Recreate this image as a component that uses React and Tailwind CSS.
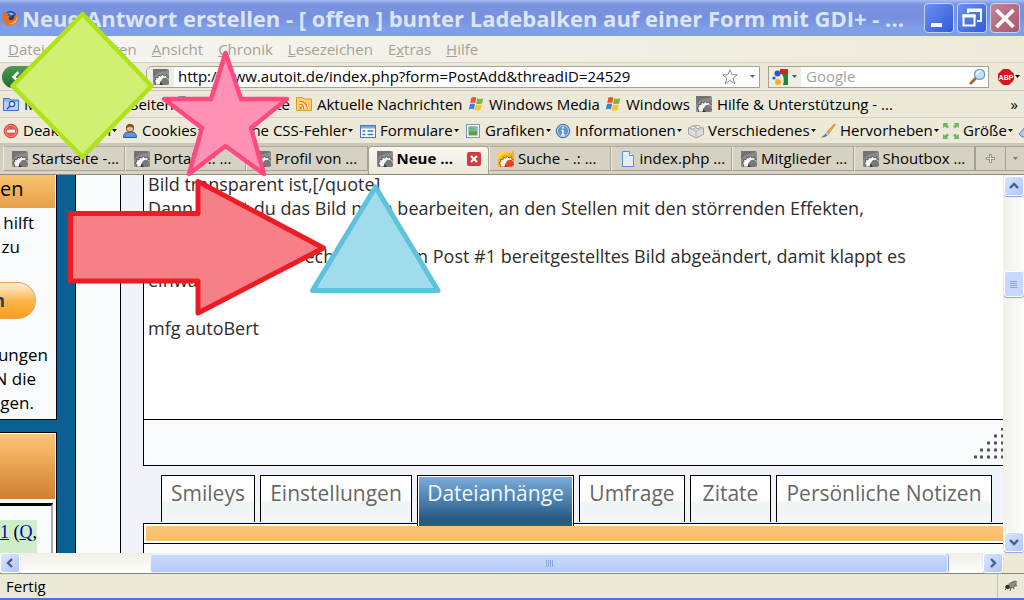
import React from "react";

const ui = "font-['Open_Sans','Noto_Sans',sans-serif]";

function Gear({ hot }) {
  return (
    <svg viewBox="0 0 16 16" className="h-4 w-4 shrink-0" aria-hidden="true">
      <rect width="16" height="16" rx="1.5" fill={hot ? "#f9b31e" : "#8d8d8d"} />
      <path d="M0 9Q4 2 14 2V0H0z" fill={hot ? "#fdd24a" : "#737373"} />
      <path
        d="M2.500 16l.3-2.500L.8 12l2.200-1.200L2.300 8.500l2.700.3L5.500 6l2.200 1.200L9.500 5l1.500 2 2.600-1.200.2 2.600L16 9v5l-3-3-5 1-1 4z"
        fill={hot ? "#fffbe8" : "#f8f8f8"}
        stroke={hot ? "#a8401a" : "#4a4a4a"}
        strokeWidth=".8"
      />
      <circle cx="12" cy="12.300" r="3.600" fill={hot ? "#e0441a" : "#787878"} />
      <path d="M6.500 16l1.200-3 2.500 3z" fill={hot ? "#b32c10" : "#3a3a3a"} />
    </svg>
  );
}

function Firefox() {
  return (
    <svg viewBox="0 0 16 16" className="h-4 w-4 shrink-0" aria-hidden="true">
      <circle cx="8.500" cy="7.500" r="6.500" fill="#1f3f8f" />
      <path d="M6 3q4-2 7 2-3-1-4 1z" fill="#6ab0ea" />
      <path d="M1 1.500l2.500 2Q5 2.500 6.500 3L5.500 5l3 1.300-2 1.500q.5 3 3.500 2.400 2.500-.7 2.300-4l2-2.200Q17 9 14 13q-3 3-7.500 2.500Q1 14.500.6 8 .4 5 1 1.500z" fill="#e8721c" />
      <path d="M14 3q2 5-1 8t-7 2.500q4 2 7.500-1Q17 8 14 3z" fill="#fbc437" />
    </svg>
  );
}

function SearchFolder() {
  return (
    <svg viewBox="0 0 16 16" className="h-4 w-4 shrink-0" aria-hidden="true">
      <path d="M.5 2.500h6l1.500 1.500h7.500v10.500H.5z" fill="#8fb7f3" stroke="#3c72cf" />
      <path d="M1 6h14v8H1z" fill="#b5d1fa" />
      <circle cx="9" cy="8" r="2.600" fill="#e8f2ff" stroke="#2a58b0" strokeWidth="1.300" />
      <path d="M7 10l-3 3" stroke="#2a58b0" strokeWidth="1.600" />
    </svg>
  );
}

function Rss() {
  return (
    <svg viewBox="0 0 16 16" className="h-4 w-4 shrink-0" aria-hidden="true">
      <path d="M.5 1.500h6L8 3h7.500v11.500H.5z" fill="#f9cf68" stroke="#dc9a2a" />
      <circle cx="4.500" cy="12" r="1.300" fill="#e97d11" />
      <path d="M3.500 8.300q4 0 4.200 4.700M3.500 5q7.500.3 7.700 8" fill="none" stroke="#fff" strokeWidth="2.600" />
      <path d="M3.500 8.300q4 0 4.200 4.700M3.500 5q7.500.3 7.700 8" fill="none" stroke="#e97d11" strokeWidth="1.400" />
    </svg>
  );
}

function WinFlag() {
  return (
    <svg viewBox="0 0 16 16" className="h-4 w-4 shrink-0" aria-hidden="true">
      <path d="M3.300 1.800q2.500-1.700 5 0L7.200 7.200q-2.700-1.500-5 0z" fill="#e9552b" />
      <path d="M9.200 2.200q3 1.500 6.200 0L14 7.500q-3 1.500-5.900 0z" fill="#7dba3c" />
      <path d="M2 8.200q2.500-1.600 5 0L5.900 13.600q-2.500-1.600-5.200 0z" fill="#3c7fd6" />
      <path d="M7.900 8.500q3 1.500 5.900 0l-1.300 5.500q-3 1.500-5.800 0z" fill="#f7c331" />
    </svg>
  );
}

function Deny() {
  return (
    <svg viewBox="0 0 16 16" className="h-4 w-4 shrink-0" aria-hidden="true">
      <circle cx="8" cy="8" r="6.800" fill="#e2574e" stroke="#c9403a" />
      <circle cx="8" cy="8" r="5.600" fill="none" stroke="#f2a49c" strokeWidth=".8" />
      <rect x="4" y="6.700" width="8" height="2.800" fill="#fff" />
    </svg>
  );
}

function Person() {
  return (
    <svg viewBox="0 0 16 16" className="h-4 w-4 shrink-0" aria-hidden="true">
      <path d="M1.500 14.500q0-5 4-5.500h5q4 .5 4 5.500z" fill="#5d95dc" stroke="#2a58a6" />
      <circle cx="8" cy="5.200" r="3.700" fill="#f1bd87" stroke="#8a4d1b" />
      <path d="M4.200 5Q4 1 8 1t3.800 4Q9 4 8 3.500 6 4.500 4.200 5z" fill="#8a4d1b" />
    </svg>
  );
}

function Check() {
  return (
    <svg viewBox="0 0 16 16" className="h-4 w-4 shrink-0" aria-hidden="true">
      <circle cx="8" cy="8" r="7" fill="#63b04a" />
      <path d="M4 8l3 3 5-6" fill="none" stroke="#fff" strokeWidth="2" />
    </svg>
  );
}

function FormIcon() {
  return (
    <svg viewBox="0 0 16 16" className="h-4 w-4 shrink-0" aria-hidden="true">
      <rect x=".5" y="2.500" width="15" height="12" fill="#fff" stroke="#4576b8" />
      <path d="M1 3h14v2.500H1z" fill="#7aa9e4" />
      <path d="M2.500 8h3M2.500 11.500h3M7.500 8h6M7.500 11.500h6" stroke="#4576b8" strokeWidth="1.400" />
    </svg>
  );
}

function ImageIcon() {
  return (
    <svg viewBox="0 0 16 16" className="h-4 w-4 shrink-0" aria-hidden="true">
      <rect x="1.500" y="1.500" width="13" height="13" fill="#fff" stroke="#7b93b4" />
      <rect x="3.500" y="3.500" width="9" height="9" fill="#58a148" />
      <path d="M3.500 3.500h9v4q-5 2-9 1z" fill="#7fb4d8" />
      <circle cx="7" cy="7" r="2.300" fill="#6fbd52" />
    </svg>
  );
}

function Info() {
  return (
    <svg viewBox="0 0 16 16" className="h-4 w-4 shrink-0" aria-hidden="true">
      <circle cx="8" cy="8" r="6.700" fill="#6497cf" stroke="#3b6ba8" />
      <circle cx="8" cy="8" r="5.600" fill="none" stroke="#c3dbf3" strokeWidth=".9" />
      <path d="M8 3.800v2M8 7v5M6.500 7.500H8M6.300 12h3.400" stroke="#fff" strokeWidth="1.500" />
    </svg>
  );
}

function Brick() {
  return (
    <svg viewBox="0 0 16 16" className="h-4 w-4 shrink-0" aria-hidden="true">
      <path d="M.5 5l6-2.500 9 2.500v6.500L8 15 .5 11z" fill="#dcdcdc" stroke="#a3a3a3" />
      <path d="M.5 5L8 8v7M8 8l7.500-3" fill="none" stroke="#b5b5b5" />
      <ellipse cx="5" cy="4.500" rx="2.200" ry="1.600" fill="#f5f5f5" stroke="#a3a3a3" />
      <ellipse cx="10" cy="4" rx="2.200" ry="1.600" fill="#f5f5f5" stroke="#a3a3a3" />
    </svg>
  );
}

function Brush() {
  return (
    <svg viewBox="0 0 16 16" className="h-4 w-4 shrink-0" aria-hidden="true">
      <path d="M15.500 1.500L9 10.500 7 8.800 14 1.200z" fill="#f2a93b" stroke="#c77a17" strokeWidth=".6" />
      <path d="M7 8.800l2 1.700-1.500 1.800-2-1.600z" fill="#cfd6de" stroke="#7c8793" strokeWidth=".5" />
      <path d="M5.500 10.700l2 1.600Q5.500 15 .5 14.500 3 13.500 5.500 10.700z" fill="#5d80a8" />
    </svg>
  );
}

function Pencil() {
  return (
    <svg viewBox="0 0 16 16" className="h-4 w-4 shrink-0" aria-hidden="true">
      <path d="M1 11L8 3l7 1-6 9q-4 3-8-2z" fill="#a9c8f2" stroke="#4e7fc6" />
    </svg>
  );
}

function Resize() {
  return (
    <svg viewBox="0 0 16 16" className="h-4 w-4 shrink-0" aria-hidden="true">
      <path
        d="M0 0h5.500L4 1.500l2 2-2 2-2-2L0 5zM16 0h-5.500L12 1.500l-2 2 2 2 2-2L16 5zM0 16h5.500L4 14.500l2-2-2-2-2 2L0 11zM16 16h-5.500l1.500-1.500-2-2 2-2 2 2L16 11z"
        fill="#74b565"
      />
    </svg>
  );
}

function Page() {
  return (
    <svg viewBox="0 0 16 16" className="h-4 w-4 shrink-0" aria-hidden="true">
      <path d="M2.500.5h7l4 4v11h-11z" fill="#e3effd" stroke="#5f8fd0" />
      <path d="M9.500.5v4h4" fill="#fff" stroke="#5f8fd0" />
    </svg>
  );
}

function Caret({ className = "text-black" }) {
  return (
    <svg viewBox="0 0 5 3" className={`h-[3px] w-[5px] shrink-0 ${className}`} aria-hidden="true">
      <path d="M0 0h5L2.500 3z" fill="currentColor" />
    </svg>
  );
}

function Chevron({ d }) {
  return (
    <svg viewBox="0 0 10 10" className="h-[10px] w-[10px]" aria-hidden="true">
      <path d={d} fill="none" stroke="#44608f" strokeWidth="2.400" />
    </svg>
  );
}

const menus = [
  ["D", "atei"],
  ["B", "earbeiten"],
  ["A", "nsicht"],
  ["C", "hronik"],
  ["L", "esezeichen"],
  ["E", "x", "tras"],
  ["H", "ilfe"],
];

const bookmarks = [
  [SearchFolder, "Meistbesuchte Seiten", "w-[173px]"],
  [Page, "Erste Schritte", "w-[120px]"],
  [Rss, "Aktuelle Nachrichten", "w-[172px]"],
  [WinFlag, "Windows Media", "w-[137px]"],
  [WinFlag, "Windows", "w-[91px]"],
  [Gear, "Hilfe & Unterstützung - ...", "w-[210px]"],
];

const tools = [
  [Deny, "Deaktivieren", "w-[119px]"],
  [Person, "Cookies", "w-[88px]"],
  [Check, "Keine CSS-Fehler", "w-[150px]"],
  [FormIcon, "Formulare", "w-[105px]"],
  [ImageIcon, "Grafiken", "w-[90px]"],
  [Info, "Informationen", "w-[133px]"],
  [Brick, "Verschiedenes", "w-[132px]"],
  [Brush, "Hervorheben", "w-[123px]"],
  [Resize, "Größe", "w-[75px]"],
];

const tabs = [
  [Gear, "Startseite -..."],
  [Gear, "Portal - .: ..."],
  [Gear, "Profil von ..."],
  [Gear, "Neue ...", "active"],
  [Gear, "Suche - .: ...", "hot"],
  [Page, "index.php ..."],
  [Gear, "Mitglieder ..."],
  [Gear, "Shoutbox ..."],
];

const formTabs = [
  ["Smileys", "w-[94px]"],
  ["Einstellungen", "w-[152px]"],
  ["Dateianhänge", "w-[157px]"],
  ["Umfrage", "w-[106px]"],
  ["Zitate", "w-[81px]"],
  ["Persönliche Notizen", "w-[216px]"],
];

const message = `Bild transparent ist,[/quote]
Dann musst du das Bild noch bearbeiten, an den Stellen mit den störrenden Effekten,

Ich hab mal entsprechend dein in Post #1 bereitgestelltes Bild abgeändert, damit klappt es
einwandfrei.

mfg autoBert`;

function TitleBar() {
  return (
    <header className="flex h-9 shrink-0 items-center gap-1 bg-[linear-gradient(#a5bdf2,#7a93df_12%,#7790dd_50%,#7fa0e9_80%,#7c9ee8)] pl-0.5 pr-1">
      <Firefox />
      <h1 className="min-w-0 flex-1 truncate font-['Open_Sans',sans-serif] text-[22px] font-bold leading-9 text-[#dbe6fb]">
        Neue Antwort erstellen - [ offen ] bunter Ladebalken auf einer Form mit GDI+ - ...
      </h1>
      <div className="flex gap-[3px]">
        <button aria-label="Minimieren" className="h-[30px] w-[30px] rounded-[4px] border border-[#c4d2f5] bg-linear-to-br from-[#6d90ee] to-[#2f5bd8]">
          <svg viewBox="0 0 28 28" aria-hidden="true"><path d="M6 19h11v4H6z" fill="#fff" /></svg>
        </button>
        <button aria-label="Verkleinern" className="h-[30px] w-[30px] rounded-[4px] border border-[#c4d2f5] bg-linear-to-br from-[#6d90ee] to-[#2f5bd8]">
          <svg viewBox="0 0 28 28" aria-hidden="true">
            <path d="M10 9V5.500h13V17h-4M5.500 11.500h11v10h-11z" fill="none" stroke="#fff" strokeWidth="2" />
            <path d="M9 5h15v3H9zM4.500 10.500h13v3h-13z" fill="#fff" />
          </svg>
        </button>
        <button aria-label="Schließen" className="h-[30px] w-[30px] rounded-[4px] border border-[#c4d2f5] bg-linear-to-br from-[#c58294] to-[#a9566c]">
          <svg viewBox="0 0 28 28" aria-hidden="true"><path d="M5.500 6l17 17M22.500 6l-17 17" stroke="#fff" strokeWidth="3.800" /></svg>
        </button>
      </div>
    </header>
  );
}

function NavBar() {
  return (
    <div className="flex h-7 shrink-0 items-center border-b border-[#cdcabb] bg-[#ece9d8] pr-1">
      <button aria-label="Zurück" className="ml-0.5 flex h-[22px] w-[27px] items-center justify-center rounded-l-full bg-linear-to-b from-[#4f9a58] to-[#1f6a2c]">
        <svg viewBox="0 0 10 10" className="h-3 w-3" aria-hidden="true"><path d="M7 1L3 5l4 4" fill="none" stroke="#fff" strokeWidth="2.200" /></svg>
      </button>
      <div className="ml-[117px] flex h-[22px] flex-1 items-center rounded-l-md border border-[#a5a294] bg-white pr-1">
        <span className="flex h-5 w-[27px] items-center rounded-l-md bg-[#efede2] pl-[6px]"><Gear /></span>
        <input
          aria-label="Adresse"
          className="h-5 min-w-0 flex-1 bg-transparent pl-1 text-[15px] text-black outline-none"
          defaultValue="http://www.autoit.de/index.php?form=PostAdd&threadID=24529"
        />
        <svg viewBox="0 0 16 16" className="h-4 w-4" aria-label="Lesezeichen">
          <path d="M8 .8l2.100 5h5.200l-4.100 3.500 1.500 5.500L8 11.500l-4.700 3.300 1.500-5.500L.7 5.800h5.200z" fill="#fff" stroke="#8b8b8b" />
        </svg>
        <button aria-label="Verlauf" className="ml-3"><Caret className="text-[#666]" /></button>
      </div>
      <div className="ml-2 flex h-[22px] w-[221px] items-center border border-[#a5a294] bg-white pr-0.5">
        <button aria-label="Suchmaschine" className="flex h-5 w-8 items-center gap-1 bg-[#efede2] pl-[3px]">
          <svg viewBox="0 0 16 16" className="h-4 w-4" aria-hidden="true">
            <path d="M8 0h8v5H8z" fill="#d8231c" />
            <path d="M10 5h6v11h-5q2-6-1-11z" fill="#178a36" />
            <circle cx="5.500" cy="4.500" r="3" fill="#2a58c5" />
            <circle cx="2" cy="9" r="1.600" fill="#2a58c5" />
            <circle cx="6" cy="13" r="3" fill="#f3b321" />
          </svg>
          <Caret className="text-[#555]" />
        </button>
        <input aria-label="Suche" placeholder="Google" className="h-5 min-w-0 flex-1 pl-[5px] text-[15px] outline-none placeholder:text-[#a3a3a3]" />
        <button aria-label="Suchen">
          <svg viewBox="0 0 16 16" className="h-[17px] w-[17px]" aria-hidden="true">
            <path d="M6.500 9.500l-5.500 5.500" stroke="#a3642c" strokeWidth="2.600" />
            <circle cx="10" cy="6" r="4.800" fill="#bfe0fb" stroke="#7a9cc4" strokeWidth="1.200" />
            <path d="M7 6q.5-3 4-3" fill="none" stroke="#fff" strokeWidth="1.400" />
          </svg>
        </button>
      </div>
      <button aria-label="Adblock Plus" className="ml-[9px] flex items-center gap-px">
        <svg viewBox="0 0 16 16" className="h-4 w-4" aria-hidden="true">
          <path d="M5 0h6l5 5v6l-5 5H5l-5-5V5z" fill="#d8141c" />
          <text x="8" y="10.500" textAnchor="middle" fontSize="7" fontWeight="bold" fill="#fff" fontFamily="Liberation Sans">ABP</text>
        </svg>
        <Caret />
      </button>
    </div>
  );
}

function SideBar() {
  return (
    <aside className="flex w-[57px] shrink-0 flex-col overflow-hidden whitespace-nowrap text-[17px] leading-6 text-black">
      <section className="flex h-[245px] shrink-0 flex-col border-b border-r border-black bg-[#f8fafd]">
        <h2 className="h-[33px] border-r border-white bg-linear-to-b from-[#f9c46f] to-[#e79f4b] pt-0.5 text-[20px]">en</h2>
        <p className="flex w-[34px] justify-end pt-[3px]">hilft</p>
        <p className="flex w-5 justify-end">zu</p>
        <button aria-label="Spenden" className="mt-[23px] h-[37px] w-9 shrink-0 overflow-hidden rounded-r-full border border-l-0 border-[#e8a25c] bg-linear-to-b from-[#fff0d2] via-[#fbb64d] to-[#fb9d13] text-left font-bold text-[#1e3f5c]">
          <span className="flex w-[5px] justify-end">n</span>
        </button>
        <p className="mt-6 flex w-12 justify-end">ungen</p>
        <p className="flex w-9 justify-end">N die</p>
        <p className="flex w-[34px] justify-end">gen.</p>
      </section>
      <section className="mt-3 flex flex-1 flex-col border-r border-t border-black bg-white">
        <div className="mt-px h-[65px] shrink-0 border-r border-white bg-linear-to-b from-[#fdc674] to-[#d07f31]" />
        <div className="mr-[3px] mt-1 flex-1 border-r-2 border-t-[3px] border-r-[#b0a8a8] border-t-black bg-[#f8fafd] pt-3.5">
          <p className="flex h-full w-[37px] justify-end bg-[#cdeecb] font-['Liberation_Serif',serif] text-[18px]">
            <a href="#1" className="text-[#0000bb] underline">1</a>&nbsp;(<a href="#q" className="text-[#0000bb] underline">Q</a>,
          </p>
        </div>
      </section>
    </aside>
  );
}

function Editor() {
  return (
    <main className="flex min-w-0 flex-1 flex-col overflow-hidden bg-[#f1f3fa]">
      <div className="h-[245px] shrink-0 overflow-hidden border-b border-l border-black bg-white">
        <textarea
          aria-label="Nachricht"
          defaultValue={message}
          className="-mt-[3px] block h-[247px] w-full resize-none overflow-hidden pl-1 text-[18px] leading-6 text-[#2d2d2d] outline-none"
        />
      </div>
      <div className="flex h-[46px] shrink-0 items-end justify-end border-b border-l border-black bg-[#f9fafc] pb-1.5">
        <svg viewBox="0 0 29 31" className="h-[31px] w-[29px]" aria-hidden="true">
          <path
            d="M27 1h2M20 8h3M27 8h2M13 15h3M20 15h3M27 15h2M6 22h3M13 22h3M20 22h3M27 22h2M0 29h3M6 29h3M13 29h3M20 29h3M27 29h2"
            stroke="#555"
            strokeWidth="3"
          />
        </svg>
      </div>
      <div role="tablist" className="mt-[9px] flex h-12 shrink-0 gap-[5px] pl-[18px] text-[21px] leading-6">
        {formTabs.map(([label, width]) =>
          label === "Dateianhänge" ? (
            <button key={label} role="tab" aria-selected="true" className={`${width} z-10 h-[51px] shrink-0 border border-b-0 border-black bg-white px-px pt-px text-[#f4f9ff]`}>
              <span className="flex h-full justify-center bg-[linear-gradient(#7cabd9,#4d83b2_45%,#295a84_85%)] pt-1">{label}</span>
            </button>
          ) : (
            <button key={label} role="tab" aria-selected="false" className={`${width} flex h-[47px] shrink-0 justify-center border border-b-0 border-black bg-[linear-gradient(#fff_50%,#eef3f5_60%,#f4f7f8)] pt-[5px] text-[#666]`}>
              {label}
            </button>
          )
        )}
      </div>
      <div className="flex flex-1 flex-col border-l border-t border-black bg-[#fafbfc]">
        <div className="h-5 shrink-0 border-b border-black bg-white pl-0.5 pt-0.5">
          <div className="h-[15px] bg-linear-to-b from-[#fbc578] to-[#f9bd6c]" />
        </div>
      </div>
    </main>
  );
}

const scrollButton =
  "flex h-5 w-5 shrink-0 items-center justify-center rounded-[3px] border border-white bg-linear-to-br from-[#dbe6ff] to-[#b0c6f8] shadow-[0_1px_1px_#8aa4dd]";

export default function App() {
  return (
    <div className={`relative flex h-screen flex-col overflow-hidden whitespace-nowrap bg-[#ece9d8] text-[15px] text-black ${ui}`}>
      <TitleBar />
      <nav className="flex h-[27px] shrink-0 items-center gap-[15px] border-b border-[#d5d2c3] bg-linear-to-r from-[#f6f5f1] to-[#edeada] pl-2 text-[#a5a294]">
        {menus.map((m) => (
          <button key={m.join("")}>
            {m.length === 3 ? <>{m[0]}<u>{m[1]}</u>{m[2]}</> : <><u>{m[0]}</u>{m[1]}</>}
          </button>
        ))}
      </nav>
      <NavBar />
      <div className="flex h-[27px] shrink-0 items-center border-b border-[#d5d2c3] pl-[3px] pr-1.5">
        {bookmarks.map(([Icon, label, width]) => (
          <button key={label} className={`${width} flex shrink-0 items-center gap-[5px]`}>
            <Icon />
            {label}
          </button>
        ))}
        <button aria-label="Weitere Lesezeichen" className="ml-auto">»</button>
      </div>
      <div className="flex h-[25px] shrink-0 items-center overflow-hidden pl-[3px]">
        {tools.map(([Icon, label, width]) => (
          <button key={label} className={`${width} flex shrink-0 items-center gap-1`}>
            <Icon />
            <span className="flex items-center gap-px">{label}<Caret /></span>
          </button>
        ))}
        <button aria-label="Extras" className="shrink-0"><Pencil /></button>
      </div>
      <div className="flex h-8 shrink-0 items-end border-b border-[#8f8c7c] bg-linear-to-b from-[#c9c6b7] to-[#d8d5c6] pl-[3px]">
        <div role="tablist" className="grid h-7 min-w-0 flex-1 grid-cols-8">
          {tabs.map(([Icon, label, kind]) =>
            kind === "active" ? (
              <div key={label} className="flex min-w-0 items-center rounded-t-[4px] border border-b-0 border-[#a5a294] bg-linear-to-b from-[#f8f7f2] to-[#ece9d8] pb-1 pl-2 pr-[7px]">
                <button role="tab" aria-selected="true" className="flex min-w-0 flex-1 items-center gap-1 font-bold"><Gear />{label}</button>
                <button aria-label="Tab schließen" className="h-[14px] w-[14px] rounded-[2px] bg-[#d03b40]">
                  <svg viewBox="0 0 14 14" aria-hidden="true"><path d="M4 4l6 6M10 4l-6 6" stroke="#fff" strokeWidth="2.200" /></svg>
                </button>
              </div>
            ) : (
              <button key={label} role="tab" aria-selected="false" className="mb-[3px] flex min-w-0 items-center gap-1 overflow-hidden border border-l-[#eeecdf] border-t-[#b0ad9e] border-r-[#a5a294] border-b-[#a5a294] bg-[#d5d2c4] pl-2">
                <Icon hot={kind === "hot"} />
                {label}
              </button>
            )
          )}
        </div>
        <button aria-label="Neuer Tab" className="mb-[3px] flex h-[25px] w-[31px] items-center justify-center border border-[#a5a294] bg-[#d5d2c4]">
          <svg viewBox="0 0 9 9" className="h-[9px] w-[9px]" aria-hidden="true"><path d="M4.500 0v9M0 4.500h9" stroke="#8a8779" strokeWidth="2.500" /><path d="M4.500 1v7M1 4.500h7" stroke="#e5e2d5" /></svg>
        </button>
        <button aria-label="Alle Tabs" className="mb-[3px] flex h-[25px] w-[18px] items-center justify-center border-y border-[#a5a294] bg-[#d5d2c4]"><Caret className="text-[#777]" /></button>
      </div>
      <div className="flex min-h-0 flex-1">
        <div className="flex min-w-0 flex-1 bg-[#0b6193] font-['Open_Sans',sans-serif]">
          <SideBar />
          <div className="ml-[18px] w-[46px] shrink-0 border-x border-black bg-[#f8fafc]" />
          <div className="w-[22px] shrink-0 bg-[#f1f3fa]" />
          <Editor />
        </div>
        <div className="flex w-[21px] flex-col items-center bg-linear-to-r from-[#f0efea] to-[#fdfdfb] py-px">
          <button aria-label="Nach oben" className={scrollButton}><Chevron d="M1 7l4-4 4 4" /></button>
          <div className="mt-[75px] flex h-[26px] w-5 flex-col items-center justify-center gap-px rounded-[3px] border border-white bg-[#c8d8fc] shadow-[0_1px_1px_#8aa4dd]">
            {[0, 1, 2, 3].map((i) => <i key={i} className="h-px w-[7px] bg-[#8ba7e2]" />)}
          </div>
          <button aria-label="Nach unten" className={`${scrollButton} mt-auto`}><Chevron d="M1 3l4 4 4-4" /></button>
        </div>
      </div>
      <div className="flex h-[21px] shrink-0 border-b border-[#85857b]">
        <div className="flex min-w-0 flex-1 items-center bg-linear-to-b from-[#f0efe8] to-[#fefefd]">
          <button aria-label="Nach links" className={scrollButton}><Chevron d="M7 1L3 5l4 4" /></button>
          <div className="ml-[130px] mr-[35px] flex h-[19px] flex-1 items-center justify-center gap-px rounded-[3px] border border-[#eef3ff] bg-linear-to-b from-[#cbd9fc] to-[#b5cafa] shadow-[1px_0_0_#8fa9e0]">
            {[0, 1, 2, 3].map((i) => <i key={i} className="h-[7px] w-px bg-[#8ba7e2]" />)}
          </div>
          <button aria-label="Nach rechts" className={scrollButton}><Chevron d="M3 1l4 4-4 4" /></button>
        </div>
        <div className="w-[21px]" />
      </div>
      <footer className="flex h-[26px] shrink-0 items-center border-b-2 border-[#3d7cd0] pl-1.5">
        <span className="flex-1">Fertig</span>
        <span className="flex h-full w-[27px] items-center justify-center border-l border-[#c5c2b2]">
          <svg viewBox="0 0 14 12" className="h-3 w-[14px]" aria-hidden="true">
            <ellipse cx="8.500" cy="5" rx="4.500" ry="3" fill="#8a8a80" transform="rotate(-20 8 5)" />
            <circle cx="3.500" cy="7" r="2.300" fill="#333" />
            <path d="M7 3l4-2 2 1M1 10l2-2M6 11l1-4M10 9l-1-2M13 6l-2-1" stroke="#555" fill="none" />
          </svg>
        </span>
      </footer>
      <svg viewBox="0 0 1024 600" className="pointer-events-none absolute left-0 top-0 z-20 h-[600px] w-[1024px]" strokeLinejoin="round" aria-hidden="true">
        <path d="M82.500 14L151.500 86 82.500 157 12.500 86z" fill="#d1f071" stroke="#aee31b" strokeWidth="4.500" />
        <path d="M225.500 53L241 99l46 0-36 29 13 46-38.500-28L189 174l13-46-38-29 47 0z" fill="#ff92b4" stroke="#ff4a80" strokeWidth="4.500" />
        <path d="M70.500 213.500H198V181.500L323.500 248 198 313V281H70.500z" fill="#f77f86" stroke="#ed1c24" strokeWidth="5" />
        <path d="M375.500 187L438 290.500H312.500z" fill="#a1dcec" stroke="#5fc2dc" strokeWidth="5" />
      </svg>
    </div>
  );
}
